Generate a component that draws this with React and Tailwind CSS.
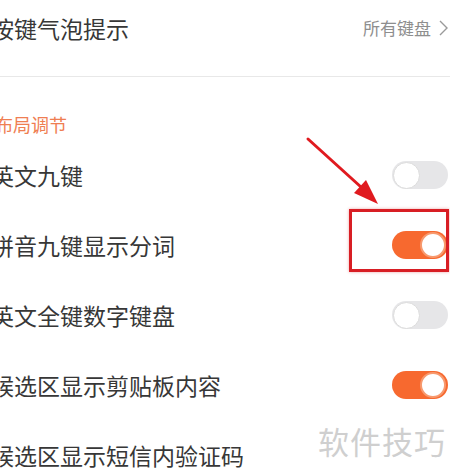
const cjk = { fontFamily: '"Noto Sans CJK SC", "Noto Sans", sans-serif' }

function Toggle({ on }) {
  return on ? (
    <div className="w-[56px] h-[28px] rounded-full bg-[#f7692f] flex items-center justify-end p-[2px]">
      <div className="w-[26px] h-[26px] rounded-full bg-white border-2 border-[#f79a6f]" />
    </div>
  ) : (
    <div className="w-[56px] h-[28px] rounded-full bg-[#e6e6e8] flex items-center justify-start p-[1px]">
      <div className="w-[27px] h-[27px] rounded-full bg-white border border-[#dcdcdc]" />
    </div>
  )
}

function Row({ label, on, highlight }) {
  return (
    <div className="h-[70px] flex items-center justify-between">
      <span className="text-[23px] text-[#373737] ml-[-9px] whitespace-nowrap">{label}</span>
      <div className="relative mr-[2px]">
        <Toggle on={on} />
        {highlight && (
          <div className="absolute left-[-43px] top-[-22px] w-[100px] h-[63px] border-[3px] border-[#d81e24] shadow-[0_0_3px_rgba(216,30,36,0.4)]" />
        )}
      </div>
    </div>
  )
}

export default function App() {
  const rows = [
    ['英文九键', false],
    ['拼音九键显示分词', true, true],
    ['英文全键数字键盘', false],
    ['候选区显示剪贴板内容', true],
    ['候选区显示短信内验证码', null],
  ]

  return (
    <div className="relative w-[450px] h-[476px] overflow-hidden bg-white" style={cjk}>
      <div className="h-[56px] flex items-center justify-between">
        <span className="text-[23px] text-[#373737] ml-[-9px] whitespace-nowrap">按键气泡提示</span>
        <div className="flex items-center gap-[8px] mr-[2px]">
          <span className="text-[17px] text-[#8e8e8e]">所有键盘</span>
          <svg width="9" height="16" viewBox="0 0 9 16" fill="none">
            <polyline points="1,1 8,8 1,15" stroke="#9a9a9a" strokeWidth="1.4" />
          </svg>
        </div>
      </div>
      <div className="h-[21px] border-b border-[#e8e8e8]" />
      <div className="mt-[35px] h-[24px] flex items-center">
        <span className="text-[18px] text-[#ef7e52] ml-[-5px]">布局调节</span>
      </div>
      <div className="mt-[4px]">
        {rows.map(([label, on, hl]) =>
          on === null ? (
            <div key={label} className="h-[70px] flex items-center">
              <span className="text-[23px] text-[#373737] ml-[-9px] whitespace-nowrap">{label}</span>
            </div>
          ) : (
            <Row key={label} label={label} on={on} highlight={hl} />
          )
        )}
      </div>

      <svg className="absolute left-0 top-0" width="450" height="476" viewBox="0 0 450 476">
        <line x1="308" y1="139" x2="372" y2="197" stroke="#e01a1f" strokeWidth="3" strokeLinecap="round" />
        <polygon points="378,204 354,193 366,180" fill="#e01a1f" />
      </svg>

      <div className="absolute left-[318px] top-[418px] text-[31px] text-[#cfcfcf] tracking-[1px]">软件技巧</div>
    </div>
  )
}
